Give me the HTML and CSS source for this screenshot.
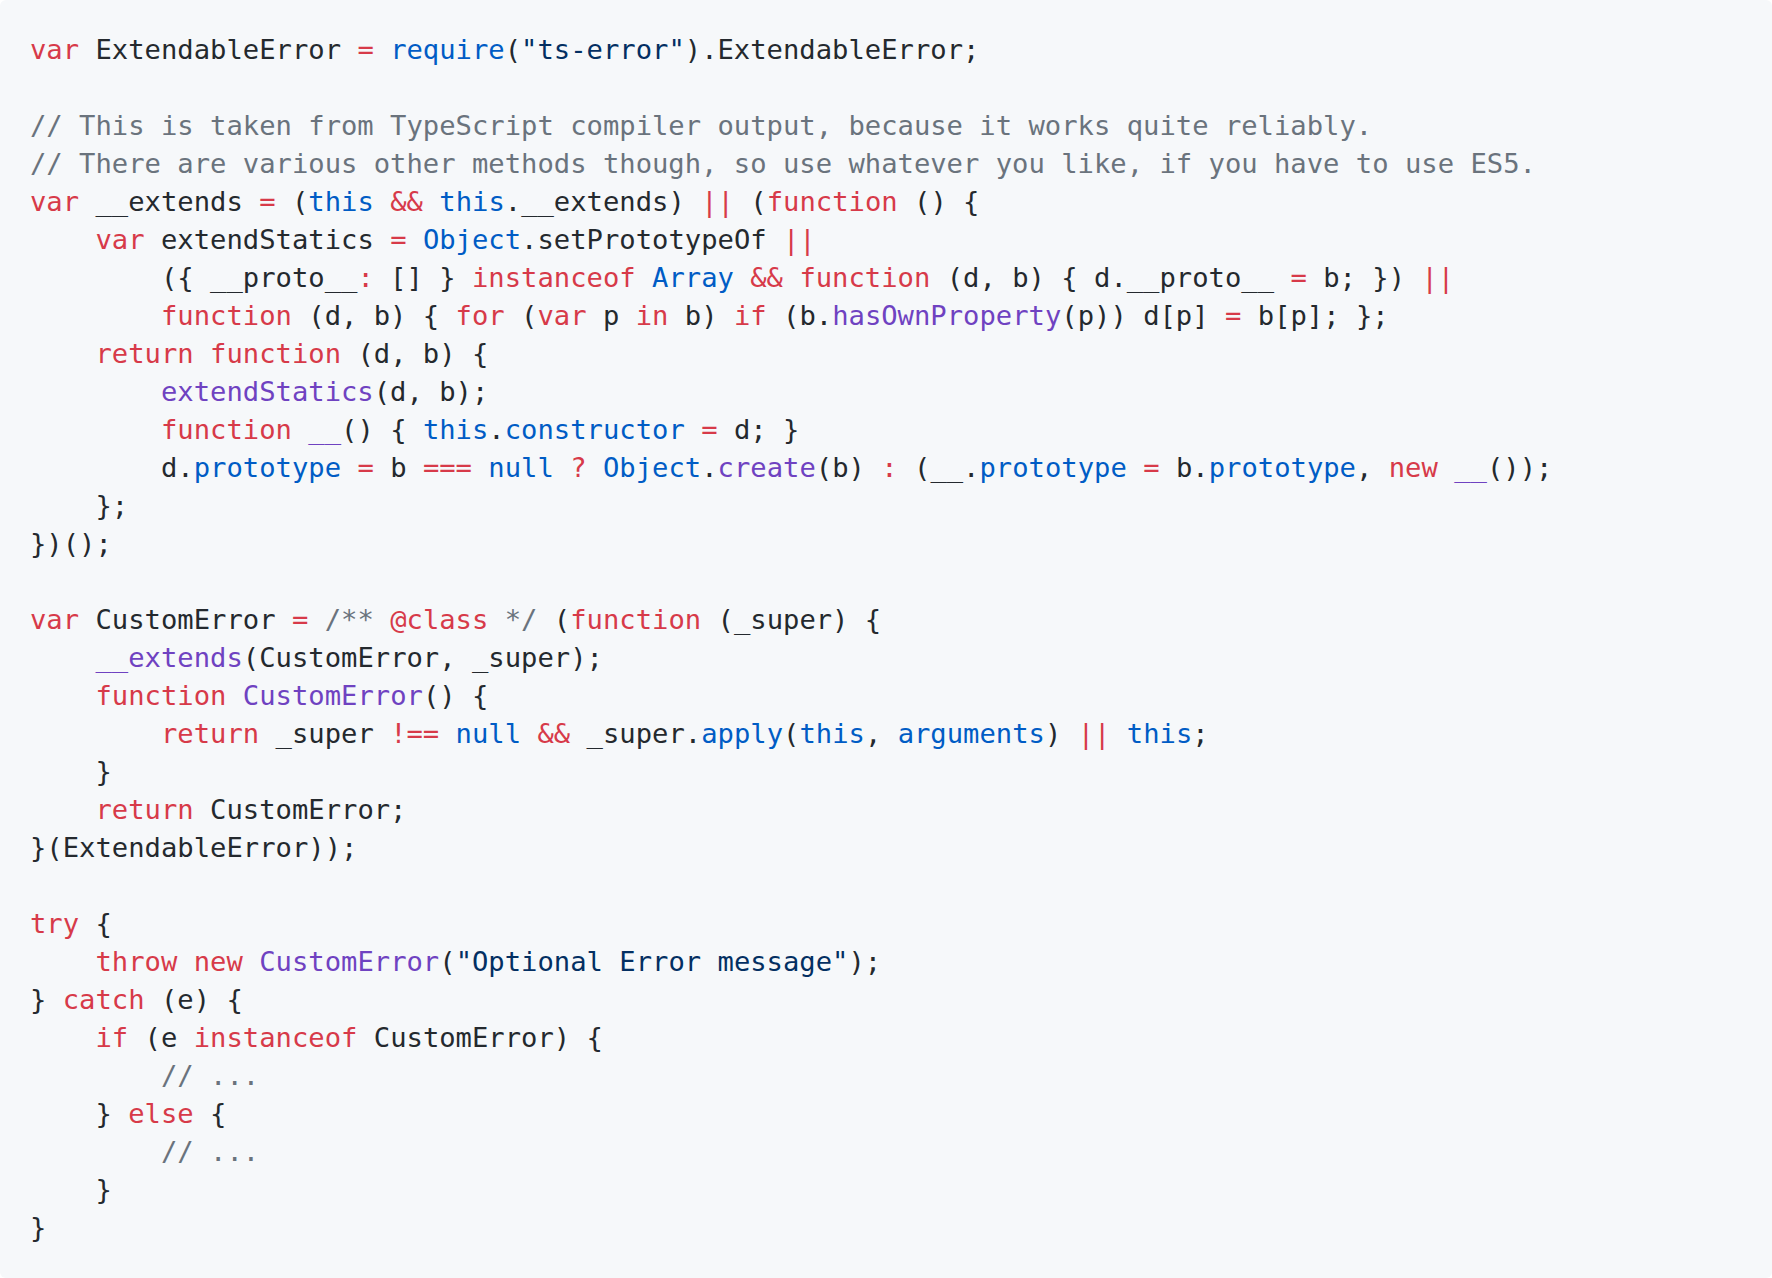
FILE: index.html
```html
<!DOCTYPE html>
<html lang="en">
<head>
<meta charset="utf-8">
<title>Custom error example</title>
<link rel="stylesheet" href="styles.css">
</head>
<body>
<div class="highlight">
  <div class="code">
    <div class="line"><span class="k">var</span> ExtendableError <span class="k">=</span> <span class="c1">require</span>(<span class="s">"ts-error"</span>).ExtendableError;</div>
    <div class="line"></div>
    <div class="line"><span class="c">// This is taken from TypeScript compiler output, because it works quite reliably.</span></div>
    <div class="line"><span class="c">// There are various other methods though, so use whatever you like, if you have to use ES5.</span></div>
    <div class="line"><span class="k">var</span> __extends <span class="k">=</span> (<span class="c1">this</span> <span class="k">&amp;&amp;</span> <span class="c1">this</span>.__extends) <span class="k">||</span> (<span class="k">function</span> () {</div>
    <div class="line">    <span class="k">var</span> extendStatics <span class="k">=</span> <span class="c1">Object</span>.setPrototypeOf <span class="k">||</span></div>
    <div class="line">        ({ __proto__<span class="k">:</span> [] } <span class="k">instanceof</span> <span class="c1">Array</span> <span class="k">&amp;&amp;</span> <span class="k">function</span> (d, b) { d.__proto__ <span class="k">=</span> b; }) <span class="k">||</span></div>
    <div class="line">        <span class="k">function</span> (d, b) { <span class="k">for</span> (<span class="k">var</span> p <span class="k">in</span> b) <span class="k">if</span> (b.<span class="en">hasOwnProperty</span>(p)) d[p] <span class="k">=</span> b[p]; };</div>
    <div class="line">    <span class="k">return</span> <span class="k">function</span> (d, b) {</div>
    <div class="line">        <span class="en">extendStatics</span>(d, b);</div>
    <div class="line">        <span class="k">function</span> <span class="en">__</span>() { <span class="c1">this</span>.<span class="c1">constructor</span> <span class="k">=</span> d; }</div>
    <div class="line">        d.<span class="c1">prototype</span> <span class="k">=</span> b <span class="k">===</span> <span class="c1">null</span> <span class="k">?</span> <span class="c1">Object</span>.<span class="en">create</span>(b) <span class="k">:</span> (__.<span class="c1">prototype</span> <span class="k">=</span> b.<span class="c1">prototype</span>, <span class="k">new</span> <span class="en">__</span>());</div>
    <div class="line">    };</div>
    <div class="line">})();</div>
    <div class="line"></div>
    <div class="line"><span class="k">var</span> CustomError <span class="k">=</span> <span class="c">/** </span><span class="k">@class</span><span class="c"> */</span> (<span class="k">function</span> (_super) {</div>
    <div class="line">    <span class="en">__extends</span>(CustomError, _super);</div>
    <div class="line">    <span class="k">function</span> <span class="en">CustomError</span>() {</div>
    <div class="line">        <span class="k">return</span> _super <span class="k">!==</span> <span class="c1">null</span> <span class="k">&amp;&amp;</span> _super.<span class="c1">apply</span>(<span class="c1">this</span>, <span class="c1">arguments</span>) <span class="k">||</span> <span class="c1">this</span>;</div>
    <div class="line">    }</div>
    <div class="line">    <span class="k">return</span> CustomError;</div>
    <div class="line">}(ExtendableError));</div>
    <div class="line"></div>
    <div class="line"><span class="k">try</span> {</div>
    <div class="line">    <span class="k">throw</span> <span class="k">new</span> <span class="en">CustomError</span>(<span class="s">"Optional Error message"</span>);</div>
    <div class="line">} <span class="k">catch</span> (e) {</div>
    <div class="line">    <span class="k">if</span> (e <span class="k">instanceof</span> CustomError) {</div>
    <div class="line">        <span class="c">// ...</span></div>
    <div class="line">    } <span class="k">else</span> {</div>
    <div class="line">        <span class="c">// ...</span></div>
    <div class="line">    }</div>
    <div class="line">}</div>
  </div>
</div>
</body>
</html>
```

FILE: styles.css
```css
html, body {
  margin: 0;
  padding: 0;
  background: #ffffff;
}

.highlight {
  background: #f6f8fa;
  border-radius: 6px;
  min-height: 100vh;
  box-sizing: border-box;
  padding: 31px 30px 29px;
}

.code {
  font-family: "DejaVu Sans Mono", "Liberation Mono", monospace;
  font-size: 27.2px;
  line-height: 38px;
  color: #24292e;
}

.line {
  white-space: pre;
  min-height: 38px;
}

.k { color: #d73a49; }
.c1 { color: #005cc5; }
.en { color: #6f42c1; }
.s { color: #032f62; }
.c { color: #6a737d; }
```
